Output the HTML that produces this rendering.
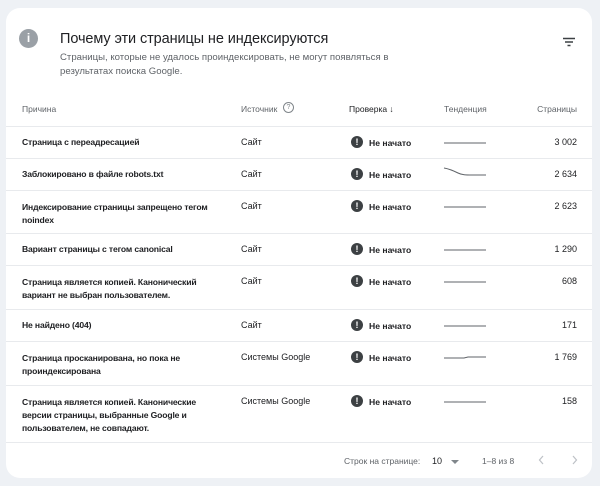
<!DOCTYPE html>
<html><head><meta charset="utf-8"><style>
*{margin:0;padding:0;box-sizing:border-box}
body{width:600px;height:486px;background:#eef1f5;font-family:"Liberation Sans",sans-serif;position:relative;overflow:hidden}
.card{position:absolute;left:6px;top:8px;width:586px;height:470px;background:#fff;border-radius:14px}
.abs{position:absolute}
.t{font-size:9px;color:#202124}
.b{font-weight:bold;font-size:8.6px;letter-spacing:-0.15px}
.line{position:absolute;left:6px;width:586px;height:1px;background:#e8eaed}
.ic{position:absolute;left:351px;width:12px;height:12px;border-radius:50%;background:#3c4043;color:#fff;font-size:9px;font-weight:bold;text-align:center;line-height:12px}
.st{position:absolute;left:369px;font-size:8.6px;font-weight:bold;color:#202124}
.num{position:absolute;right:23px;font-size:9px;color:#202124}
</style></head><body>
<div class="card"></div>
<div class="abs" style="left:19px;top:29px;width:19px;height:19px;border-radius:50%;background:#9aa0a6;color:#fff;font-weight:bold;font-size:12px;text-align:center;line-height:19px">i</div>
<div class="abs" style="left:60px;top:31px;font-size:14.5px;color:#202124;letter-spacing:-0.1px">Почему эти страницы не индексируются</div>
<div class="abs" style="left:60px;top:51px;font-size:9.6px;color:#5f6368;line-height:14px;width:360px">Страницы, которые не удалось проиндексировать, не могут появляться в результатах поиска Google.</div>
<svg class="abs" style="left:562px;top:37px" width="14" height="10"><path d="M1 1.5h12M3 5h8M5.5 8.5h3" stroke="#3c4043" stroke-width="1.4"/></svg>
<div class="abs t" style="left:22px;top:104px;color:#5f6368;font-size:8.5px">Причина</div>
<div class="abs t" style="left:241px;top:104px;color:#5f6368;font-size:8.5px">Источник</div>
<div class="abs" style="left:283px;top:102px;width:11px;height:11px;border:1px solid #80868b;border-radius:50%;font-size:7px;color:#80868b;text-align:center;line-height:9px">?</div>
<div class="abs t" style="left:349px;top:104px;font-size:8.5px">Проверка ↓</div>
<div class="abs t" style="left:444px;top:104px;color:#5f6368;font-size:8.5px">Тенденция</div>
<div class="abs t" style="right:23px;top:104px;color:#5f6368;font-size:8.5px">Страницы</div>
<div class="line" style="top:126px"></div>
<div class="line" style="top:158px"></div>
<div class="line" style="top:190px"></div>
<div class="line" style="top:233px"></div>
<div class="line" style="top:265px"></div>
<div class="line" style="top:309px"></div>
<div class="line" style="top:341px"></div>
<div class="line" style="top:385px"></div>
<div class="line" style="top:442px"></div>

<div class="abs t b" style="left:22px;top:137px">Страница с переадресацией</div>
<div class="abs t b" style="left:22px;top:169px">Заблокировано в файле robots.txt</div>
<div class="abs t b" style="left:22px;top:201px;line-height:13px;width:205px">Индексирование страницы запрещено тегом noindex</div>
<div class="abs t b" style="left:22px;top:244px">Вариант страницы с тегом canonical</div>
<div class="abs t b" style="left:22px;top:276px;line-height:13px;width:200px">Страница является копией. Канонический вариант не выбран пользователем.</div>
<div class="abs t b" style="left:22px;top:320px">Не найдено (404)</div>
<div class="abs t b" style="left:22px;top:352px;line-height:13px;width:180px">Страница просканирована, но пока не проиндексирована</div>
<div class="abs t b" style="left:22px;top:396px;line-height:13px;width:185px">Страница является копией. Канонические версии страницы, выбранные Google и пользователем, не совпадают.</div>

<div class="abs t" style="left:241px;top:137px">Сайт</div>
<div class="abs t" style="left:241px;top:169px">Сайт</div>
<div class="abs t" style="left:241px;top:201px">Сайт</div>
<div class="abs t" style="left:241px;top:244px">Сайт</div>
<div class="abs t" style="left:241px;top:276px">Сайт</div>
<div class="abs t" style="left:241px;top:320px">Сайт</div>
<div class="abs t" style="left:241px;top:352px">Системы Google</div>
<div class="abs t" style="left:241px;top:396px">Системы Google</div>

<div class="ic" style="top:136px">!</div><div class="st" style="top:138px">Не начато</div>
<div class="ic" style="top:168px">!</div><div class="st" style="top:170px">Не начато</div>
<div class="ic" style="top:200px">!</div><div class="st" style="top:202px">Не начато</div>
<div class="ic" style="top:243px">!</div><div class="st" style="top:245px">Не начато</div>
<div class="ic" style="top:275px">!</div><div class="st" style="top:277px">Не начато</div>
<div class="ic" style="top:319px">!</div><div class="st" style="top:321px">Не начато</div>
<div class="ic" style="top:351px">!</div><div class="st" style="top:353px">Не начато</div>
<div class="ic" style="top:395px">!</div><div class="st" style="top:397px">Не начато</div>

<svg class="abs" style="left:0;top:0" width="600" height="486">
<g stroke="#5f6368" stroke-width="1" fill="none">
<path d="M444 143h42"/>
<path d="M444 168c6 1 10 3 14 5s8 2 14 2h14"/>
<path d="M444 207h42"/>
<path d="M444 250h42"/>
<path d="M444 282h42"/>
<path d="M444 326h42"/>
<path d="M444 358h20l4 -1h18"/>
<path d="M444 402h42"/>
</g></svg>

<div class="num" style="top:137px">3 002</div>
<div class="num" style="top:169px">2 634</div>
<div class="num" style="top:201px">2 623</div>
<div class="num" style="top:244px">1 290</div>
<div class="num" style="top:276px">608</div>
<div class="num" style="top:320px">171</div>
<div class="num" style="top:352px">1 769</div>
<div class="num" style="top:396px">158</div>

<div class="abs" style="left:344px;top:456px;font-size:8.5px;color:#5f6368">Строк на странице:</div>
<div class="abs" style="left:432px;top:456px;font-size:9px;color:#202124">10</div>
<div class="abs" style="left:451px;top:460px;width:0;height:0;border-left:4px solid transparent;border-right:4px solid transparent;border-top:4px solid #80868b"></div>
<div class="abs" style="left:482px;top:456px;font-size:8.5px;color:#5f6368">1–8 из 8</div>
<svg class="abs" style="left:538px;top:454px" width="40" height="12"><path d="M5 2l-3.5 4 3.5 4M35 2l3.5 4-3.5 4" stroke="#bdc1c6" stroke-width="1.2" fill="none"/></svg>
</body></html>
